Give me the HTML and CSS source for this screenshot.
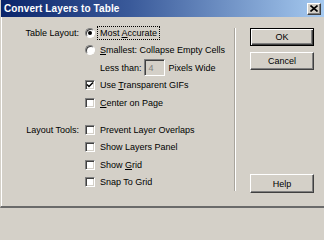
FILE: index.html
```html
<!DOCTYPE html>
<html>
<head>
<meta charset="utf-8">
<link rel="stylesheet" href="styles.css">
</head>
<body>
<div class="window">
  <div class="titlebar">
    <span class="title">Convert Layers to Table</span>
    <span class="close">
      <svg width="8" height="7" viewBox="0 0 8 7"><path d="M0.5 0.5 L7.5 6.5 M7.5 0.5 L0.5 6.5" stroke="#000" stroke-width="1.6" fill="none"/></svg>
    </span>
  </div>
  <div class="body">
    <div class="panel">
      <div class="group">
        <div class="label">Table Layout:</div>
        <div class="opt"><span class="radio on"></span><span class="focus">Most <u>A</u>ccurate</span></div>
        <div></div>
        <div class="opt"><span class="radio"></span><span><u>S</u>mallest: Collapse Empty Cells</span></div>
        <div></div>
        <div class="opt indent"><span>Less than:</span><span class="field">4</span><span class="after">Pixels Wide</span></div>
        <div></div>
        <div class="opt"><span class="check on"><svg width="8" height="8" viewBox="0 0 8 8"><path d="M1 3.5 L3 5.5 L7 1.5" stroke="#000" stroke-width="1.5" fill="none"/></svg></span><span>Use <u>T</u>ransparent GIFs</span></div>
        <div></div>
        <div class="opt"><span class="check"></span><span><u>C</u>enter on Page</span></div>
      </div>
      <div class="group second">
        <div class="label">Layout Tools:</div>
        <div class="opt"><span class="check"></span><span>Prevent Layer Overlaps</span></div>
        <div></div>
        <div class="opt"><span class="check"></span><span>Show Layers Panel</span></div>
        <div></div>
        <div class="opt"><span class="check"></span><span>Show <u>G</u>rid</span></div>
        <div></div>
        <div class="opt"><span class="check"></span><span>Snap To Grid</span></div>
      </div>
    </div>
    <div class="sep"></div>
    <div class="buttons">
      <div class="btn default">OK</div>
      <div class="btn">Cancel</div>
      <div class="btn help">Help</div>
    </div>
  </div>
</div>
</body>
</html>
```

FILE: styles.css
```css
* { box-sizing: border-box; }
html, body { margin: 0; padding: 0; }
body {
  width: 324px;
  height: 208px;
  overflow: hidden;
  background: #d4d0c8;
  font-family: "Liberation Sans", Arial, sans-serif;
  font-size: 9px;
  color: #000;
}
.window {
  width: 324px;
  height: 208px;
  display: flex;
  flex-direction: column;
  background: #d4d0c8;
  border-left: 1px solid #d4d0c8;
  border-bottom: 2px solid #6a6a6a;
  box-shadow: inset 1px 0 0 #fff;
}
.titlebar {
  height: 17px;
  flex: none;
  display: flex;
  align-items: center;
  justify-content: space-between;
  padding: 0 3px 0 3px;
  background: linear-gradient(to right, #0a246a 0%, #3a5a9a 40%, #a6caf0 100%);
}
.title {
  color: #fff;
  font-weight: bold;
  font-size: 10px;
  letter-spacing: 0.1px;
}
.close {
  width: 14px;
  height: 12px;
  display: flex;
  align-items: center;
  justify-content: center;
  background: #d4d0c8;
  border: 1px solid;
  border-color: #fff #404040 #404040 #fff;
  box-shadow: inset -1px -1px 0 #808080;
}
.body {
  flex: 1;
  display: flex;
}
.panel {
  width: 233px;
  display: flex;
  flex-direction: column;
  padding-top: 7px;
}
.group {
  display: grid;
  grid-template-columns: 78px 1fr;
  column-gap: 6px;
  grid-auto-rows: 17.5px;
  align-items: center;
}
.group.second { margin-top: 9.5px; }
.label { text-align: right; white-space: nowrap; }
.opt {
  display: flex;
  align-items: center;
  white-space: nowrap;
  gap: 5px;
}
.opt.indent { padding-left: 15px; gap: 0; }
.radio {
  width: 10px;
  height: 10px;
  border-radius: 50%;
  background: #fff;
  border: 1px solid;
  border-color: #808080 #fff #fff #808080;
  box-shadow: inset 1px 1px 0 #404040;
  display: flex;
  align-items: center;
  justify-content: center;
  flex: none;
}
.radio.on::after {
  content: "";
  width: 4px;
  height: 4px;
  border-radius: 50%;
  background: #000;
}
.focus {
  outline: 1px dotted #000;
  padding: 1px 2px;
  margin-left: -2px;
}
.check {
  width: 10px;
  height: 10px;
  background: #fff;
  border: 1px solid;
  border-color: #808080 #fff #fff #808080;
  box-shadow: inset 1px 1px 0 #404040, inset -1px -1px 0 #d4d0c8;
  display: flex;
  align-items: center;
  justify-content: center;
  flex: none;
}
.field {
  width: 21px;
  height: 17px;
  margin-left: 2px;
  padding-left: 4px;
  display: flex;
  align-items: center;
  color: #808080;
  background: #d4d0c8;
  border: 1px solid;
  border-color: #808080 #fff #fff #808080;
  box-shadow: inset 1px 1px 0 #404040, inset -1px -1px 0 #d4d0c8;
}
.after { margin-left: 4px; }
.sep {
  width: 2px;
  margin: 11px 0 15px 0;
  border-left: 1px solid #a8a49c;
  border-right: 1px solid #fff;
}
.buttons {
  display: flex;
  flex-direction: column;
  gap: 6px;
  padding: 11px 0 13px 14px;
}
.btn {
  width: 64px;
  height: 18px;
  display: flex;
  align-items: center;
  justify-content: center;
  background: #d4d0c8;
  border: 1px solid;
  border-color: #fff #404040 #404040 #fff;
  box-shadow: inset -1px -1px 0 #808080;
}
.btn.default {
  border: 1px solid #000;
  box-shadow: inset 1px 1px 0 #fff, inset -1px -1px 0 #404040, inset -2px -2px 0 #808080;
}
.btn.help {
  margin-top: auto;
  height: 19px;
}
```
